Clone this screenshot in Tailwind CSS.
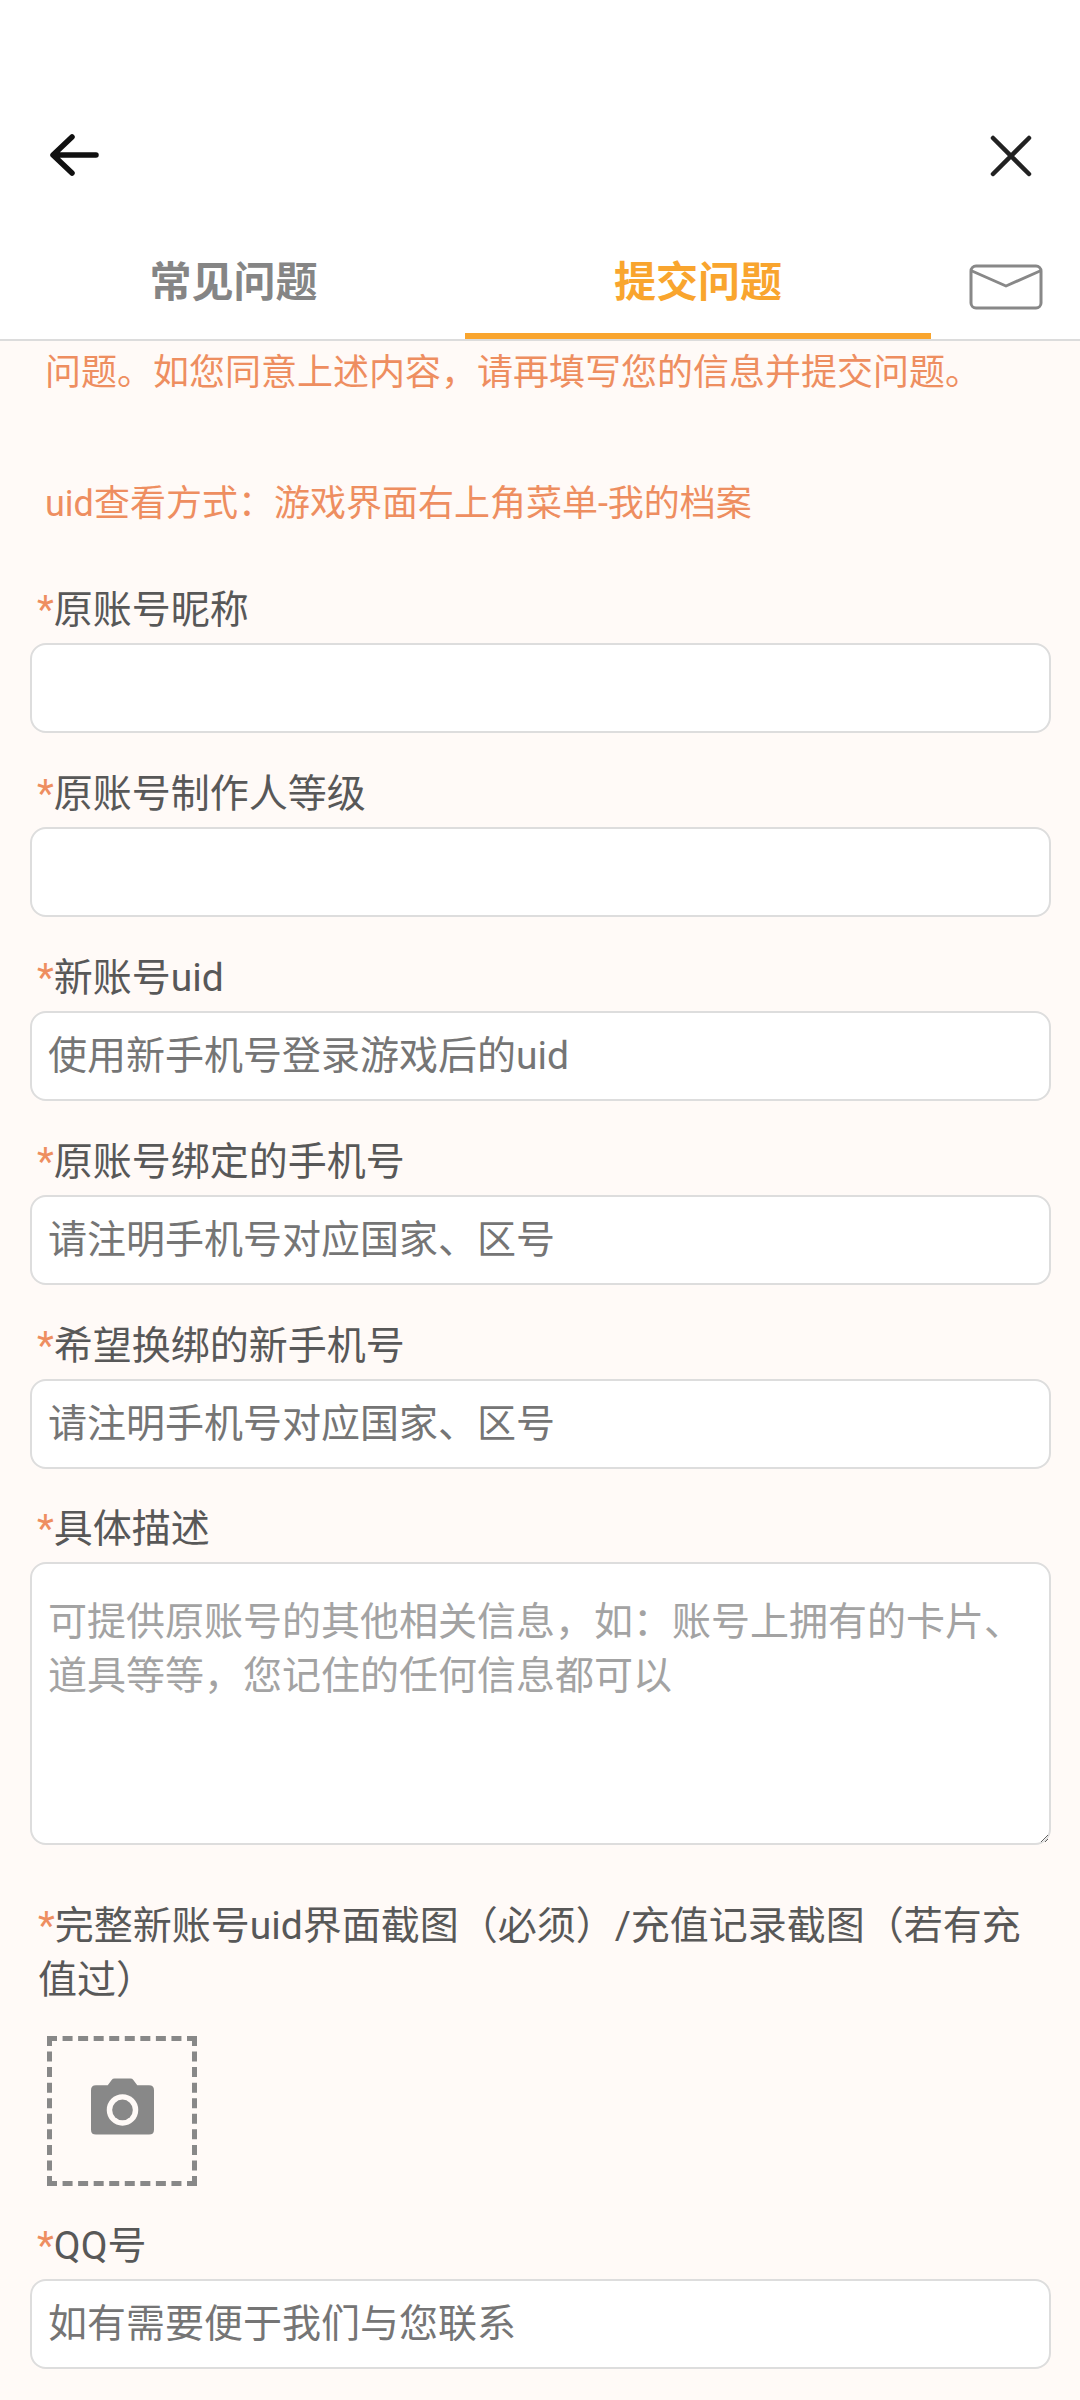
<!DOCTYPE html>
<html lang="zh">
  <head>
    <meta charset="UTF-8" />
    <meta name="viewport" content="width=device-width, initial-scale=1.0" />
    <script src="https://cdn.jsdelivr.net/npm/@tailwindcss/browser@4"></script>
    <title>提交问题</title>
  </head>
  <body class="h-[2400px] overflow-hidden bg-[#fffaf7] font-['Roboto','Noto_Sans_CJK_SC',sans-serif]">
    <!-- header -->
    <header class="bg-white">
      <div class="flex h-[220px] items-start justify-between pt-[130px] pr-[48px] pl-[48px]">
        <svg class="h-[50px] w-[54px]" viewBox="0 0 54 50" fill="none" stroke="#111" stroke-width="5.500" stroke-linecap="round" stroke-linejoin="round">
          <path d="M48 25H6M24 7 5 25l19 18" />
        </svg>
        <svg class="mt-[5px] h-[42px] w-[42px]" viewBox="0 0 42 42" fill="none" stroke="#222" stroke-width="4.500" stroke-linecap="round">
          <path d="M3 3l36 36M39 3 3 39" />
        </svg>
      </div>
      <!-- tabs -->
      <div class="relative flex h-[121px] border-b-2 border-[#dcdcdc]">
        <div class="w-[465px] pt-[33px] pl-[2px] text-center text-[42px] leading-[60px] font-bold text-[#858585]">常见问题</div>
        <div class="h-[119px] w-[466px] border-b-[6px] border-[#f9a52e] pt-[33px] text-center text-[42px] leading-[60px] font-bold text-[#f9a52e]">提交问题</div>
        <svg class="absolute top-[44px] left-[969px] h-[46px] w-[74px]" viewBox="0 0 74 46" fill="none" stroke="#888" stroke-width="3" stroke-linecap="round" stroke-linejoin="round">
          <rect x="2" y="2" width="70" height="42" rx="5" />
          <path d="M3 7l34 15L71 7" />
        </svg>
      </div>
    </header>

    <main class="px-[30px] text-[39px] leading-[54px] text-[#585858]">
      <p class="mt-[5px] pl-[15px] text-[36px] text-[#ee8e60]">问题。如您同意上述内容&#xFF0C;请再填写您的信息并提交问题。</p>
      <p class="mt-[77px] pl-[15px] text-[36px] text-[#ee8e60]">uid查看方式&#xFF1A;游戏界面右上角菜单-我的档案</p>

      <form class="mt-[52px]">
        <label class="block pl-[7px]"><span class="text-[#ee8e60]">*</span>原账号昵称</label>
        <input class="mt-[6px] block h-[90px] w-[1021px] rounded-[16px] border-2 border-[#dddddd] bg-white px-[16px]" />

        <label class="mt-[34px] block pl-[7px]"><span class="text-[#ee8e60]">*</span>原账号制作人等级</label>
        <input class="mt-[6px] block h-[90px] w-[1021px] rounded-[16px] border-2 border-[#dddddd] bg-white px-[16px]" />

        <label class="mt-[34px] block pl-[7px]"><span class="text-[#ee8e60]">*</span>新账号uid</label>
        <input class="mt-[6px] block h-[90px] w-[1021px] rounded-[16px] border-2 border-[#dddddd] bg-white px-[16px] placeholder:text-[#757575]" placeholder="使用新手机号登录游戏后的uid" />

        <label class="mt-[34px] block pl-[7px]"><span class="text-[#ee8e60]">*</span>原账号绑定的手机号</label>
        <input class="mt-[6px] block h-[90px] w-[1021px] rounded-[16px] border-2 border-[#dddddd] bg-white px-[16px] placeholder:text-[#757575]" placeholder="请注明手机号对应国家、区号" />

        <label class="mt-[34px] block pl-[7px]"><span class="text-[#ee8e60]">*</span>希望换绑的新手机号</label>
        <input class="mt-[6px] block h-[90px] w-[1021px] rounded-[16px] border-2 border-[#dddddd] bg-white px-[16px] placeholder:text-[#757575]" placeholder="请注明手机号对应国家、区号" />

        <label class="mt-[33px] block pl-[7px]"><span class="text-[#ee8e60]">*</span>具体描述</label>
        <textarea class="mt-[6px] block h-[283px] w-[1021px] rounded-[16px] border-2 border-[#dddddd] bg-white px-[16px] pt-[31px] placeholder:text-[#a3a3a3]" placeholder="可提供原账号的其他相关信息&#xFF0C;如&#xFF1A;账号上拥有的卡片、道具等等&#xFF0C;您记住的任何信息都可以"></textarea>

        <label class="mt-[54px] block w-[1021px] pl-[8px]"><span class="text-[#ee8e60]">*</span>完整新账号uid界面截图&#xFF08;必须&#xFF09;/充值记录截图&#xFF08;若有充值过&#xFF09;</label>
        <div class="mt-[29px] ml-[17px] flex h-[150px] w-[150px] items-center justify-center border-[5px] border-dashed border-[#888]">
          <svg class="mb-[10px] h-[57px] w-[63px]" viewBox="0 0 64 57">
            <path fill="#888" fill-rule="evenodd" d="M24 0h16q2 0 3 1.500L47 7h12q5 0 5 5v40q0 5-5 5H5q-5 0-5-5V12q0-5 5-5h12l4-5.500Q22 0 24 0Z" />
            <circle cx="32" cy="32" r="16" fill="#fffaf7" />
            <circle cx="32" cy="32" r="10.500" fill="#888" />
          </svg>
        </div>

        <label class="mt-[33px] block pl-[7px]"><span class="text-[#ee8e60]">*</span>QQ号</label>
        <input class="mt-[6px] block h-[90px] w-[1021px] rounded-[16px] border-2 border-[#dddddd] bg-white px-[16px] placeholder:text-[#757575]" placeholder="如有需要便于我们与您联系" />
      </form>
    </main>
  </body>
</html>
